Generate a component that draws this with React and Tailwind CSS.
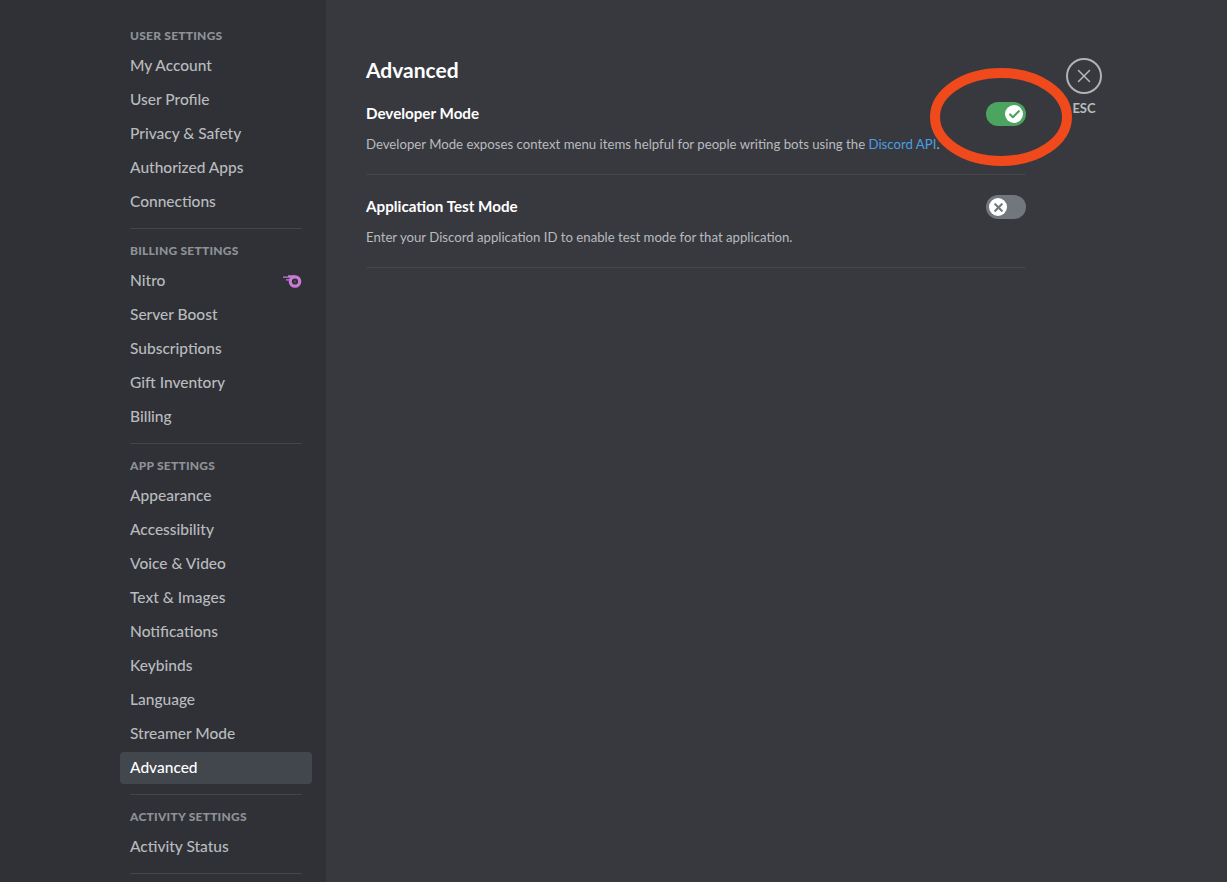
import React from "react";
import { Check, X } from "lucide-react";

const sections = [
  { title: "User Settings", items: ["My Account", "User Profile", "Privacy & Safety", "Authorized Apps", "Connections"] },
  { title: "Billing Settings", items: ["Nitro", "Server Boost", "Subscriptions", "Gift Inventory", "Billing"] },
  {
    title: "App Settings",
    items: ["Appearance", "Accessibility", "Voice & Video", "Text & Images", "Notifications", "Keybinds", "Language", "Streamer Mode", "Advanced"],
  },
  { title: "Activity Settings", items: ["Activity Status"] },
];

function NitroIcon() {
  return (
    <svg width="20" height="14" viewBox="0 0 20 14" fill="none">
      <circle cx="13" cy="7.5" r="4.7" stroke="#c97ad6" strokeWidth="3.2" />
      <path d="M1 3.2h10M4 5.8h4M6 1.8h7" stroke="#c97ad6" strokeWidth="1.2" />
      <circle cx="13" cy="7.5" r="1.2" fill="#5a4560" />
    </svg>
  );
}

function NavItem({ label }) {
  const active = label === "Advanced";
  return (
    <div
      className={`mb-[2px] flex h-8 items-center justify-between rounded-[4px] px-[10px] text-[15.5px] font-medium ${
        active ? "bg-[#42464d] text-white" : "text-[#b9bbbe]"
      }`}
    >
      <span>{label}</span>
      {label === "Nitro" && <NitroIcon />}
    </div>
  );
}

function Sidebar() {
  return (
    <aside className="h-full w-[326px] shrink-0 overflow-hidden bg-[#2f3136] pl-[120px] pr-[14px] pt-[22px]">
      {sections.map((section) => (
        <div key={section.title}>
          <h2 className="flex h-7 items-center px-[10px] text-xs font-black tracking-[0.02em] uppercase text-[#8e9297]">
            {section.title}
          </h2>
          {section.items.map((item) => (
            <NavItem key={item} label={item} />
          ))}
          <div className="mx-[10px] mb-2 mt-[10px] h-px bg-[#42454a]" />
        </div>
      ))}
    </aside>
  );
}

function Toggle({ on }) {
  return (
    <div className={`flex h-6 w-10 items-center rounded-full px-[3px] ${on ? "justify-end bg-[#4ba45f]" : "justify-start bg-[#72767d]"}`}>
      <span className="grid h-[18px] w-[18px] place-items-center rounded-full bg-white">
        {on ? (
          <Check size={13} strokeWidth={4} className="text-[#4ba45f]" />
        ) : (
          <X size={13} strokeWidth={4} className="text-[#72767d]" />
        )}
      </span>
    </div>
  );
}

function SettingRow({ title, on, children }) {
  return (
    <div className="mb-5 border-b border-[#42454a] pb-5">
      <div className="flex h-6 items-center justify-between">
        <h3 className="-translate-y-px text-[15.2px] font-bold text-white">{title}</h3>
        <Toggle on={on} />
      </div>
      <p className="mt-2 h-5 text-[13.2px] leading-5 text-[#b9bbbe]">{children}</p>
    </div>
  );
}

export default function App() {
  return (
    <div className="relative flex h-[882px] w-full overflow-hidden bg-[#37393f] font-['Lato',sans-serif]">
      <Sidebar />
      <main className="flex flex-1 items-start pl-10 pt-[58px]">
        <div className="w-[660px]">
          <h1 className="mb-5 text-[21px] leading-6 font-bold text-white">Advanced</h1>
          <SettingRow title="Developer Mode" on>
            Developer Mode exposes context menu items helpful for people writing bots using the{" "}
            <a className="text-[#4a9fe0]">Discord API</a>.
          </SettingRow>
          <SettingRow title="Application Test Mode">
            Enter your Discord application ID to enable test mode for that application.
          </SettingRow>
        </div>
        <div className="ml-10 flex flex-col items-center">
          <div className="grid h-9 w-9 place-items-center rounded-full border-2 border-[#b0b2b5] text-[#b9bbbe]">
            <X size={22} strokeWidth={1.5} />
          </div>
          <span className="mt-[6px] text-[13px] leading-4 font-bold text-[#b9bbbe]">ESC</span>
        </div>
      </main>
      {/* red annotation round the toggle */}
      <svg className="absolute left-[925px] top-[62px]" width="152" height="110" viewBox="0 0 152 110" fill="none">
        <ellipse cx="76" cy="55" rx="66" ry="44" stroke="#f04a1c" strokeWidth="10" />
      </svg>
    </div>
  );
}
